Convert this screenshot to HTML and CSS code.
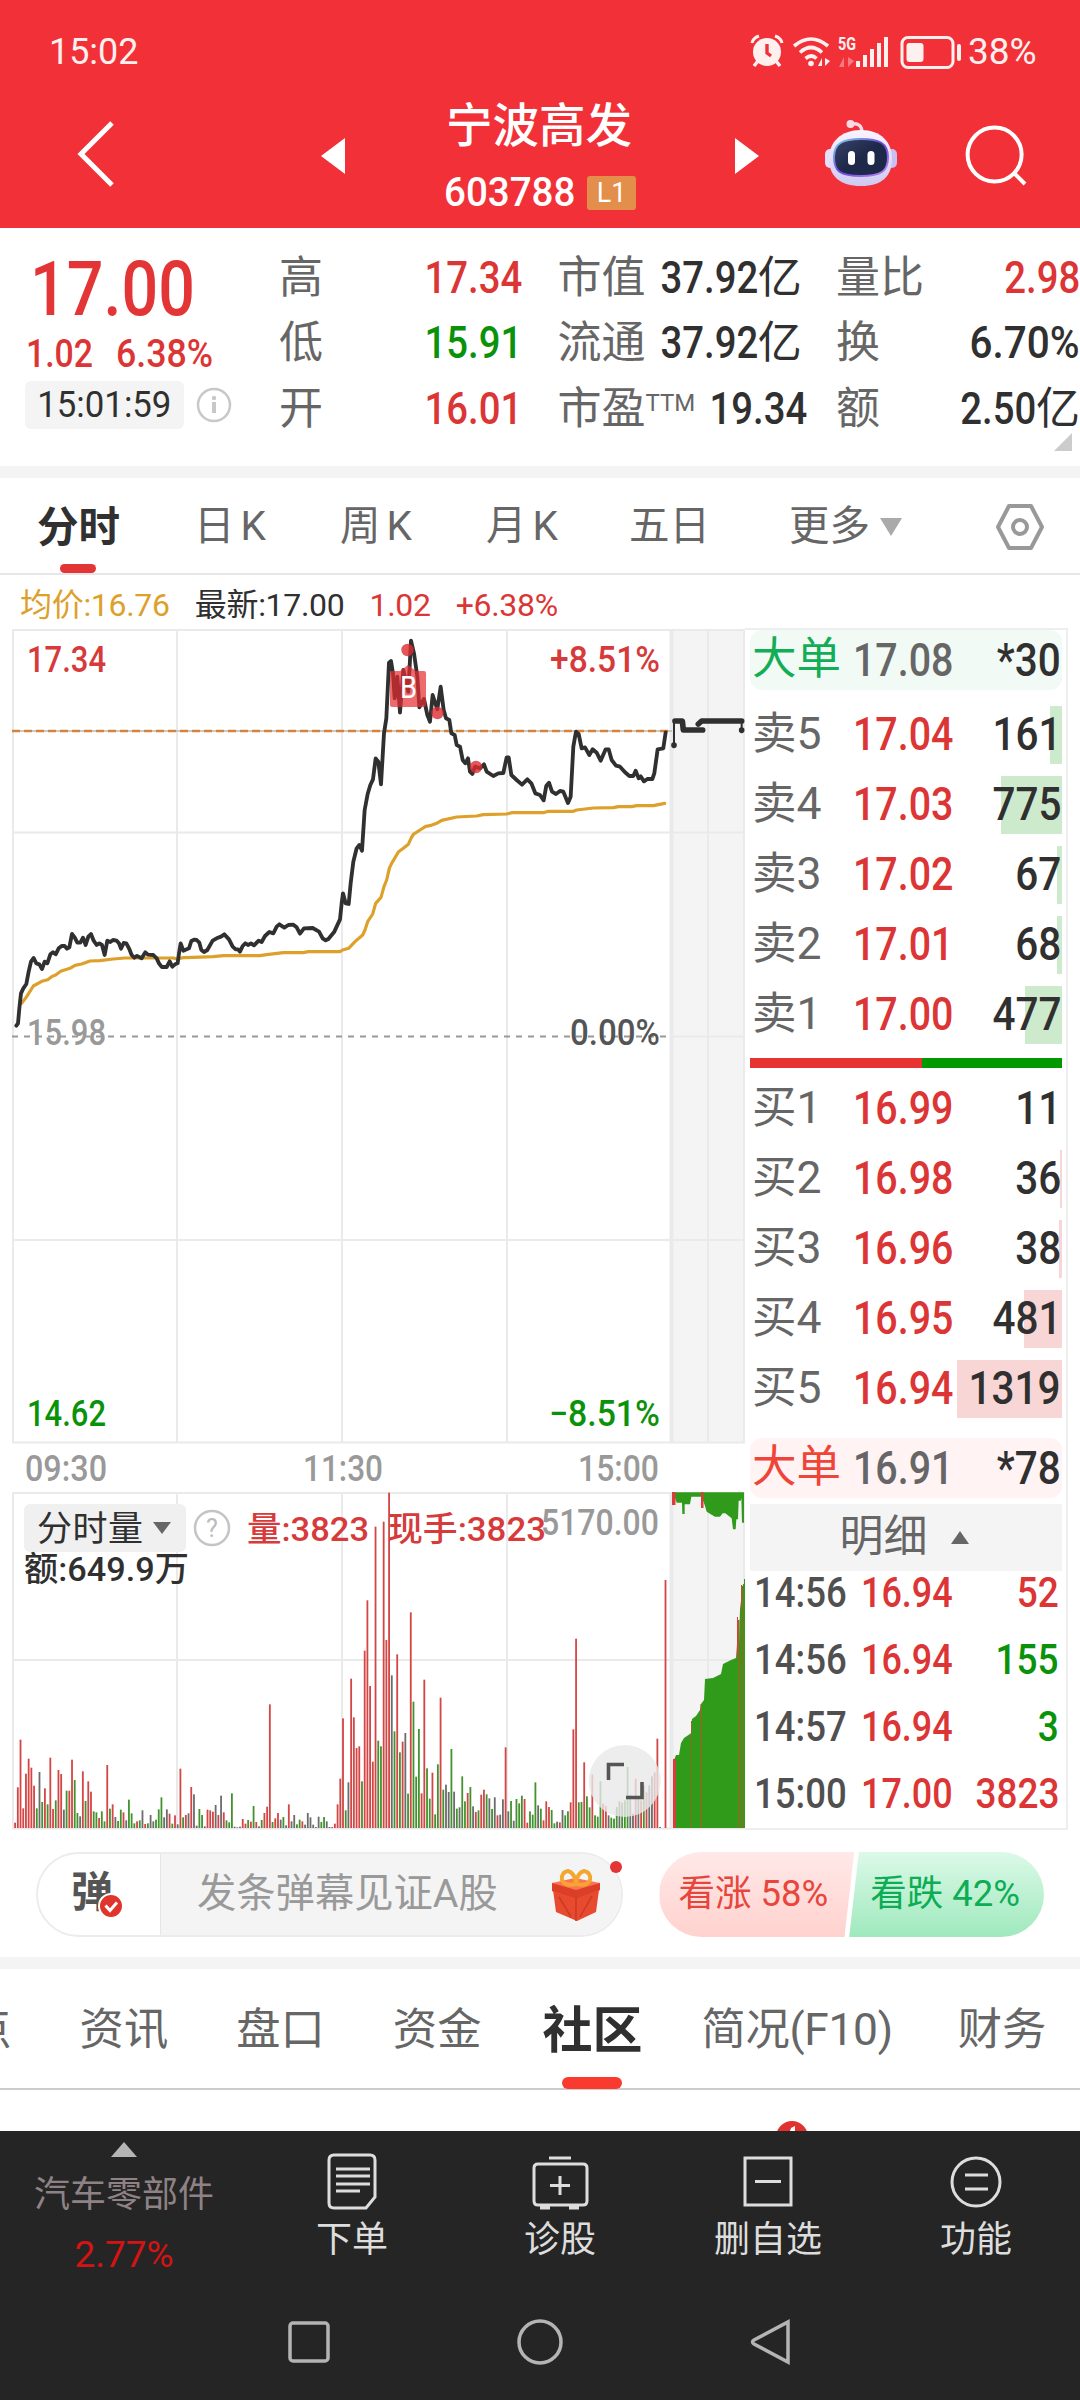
FILE: index.html
```html
<!DOCTYPE html>
<html lang="zh-CN">
<head>
<meta charset="utf-8">
<title>宁波高发 603788</title>
<link rel="stylesheet" href="styles.css">
</head>
<body>
<header class="top">
  <div class="status">
    <span class="clock">15:02</span>
    <svg class="status-icons" width="222" height="36" viewBox="740 34 222 36">
      <g fill="#fff0f0">
        <circle cx="766" cy="52" r="14"/>
        <path d="M751 43q1-5 7-7M781 43q-1-5-7-7" fill="none" stroke="#fff0f0" stroke-width="3"/>
        <path d="M757 61l-4 5M775 61l4 5" stroke="#fff0f0" stroke-width="3.5"/>
        <path d="M766 44v9l4 3" fill="none" stroke="#f03038" stroke-width="3.4"/>
        <g fill="none" stroke="#fff0f0" stroke-width="3.6">
          <path d="M793 46q17-14 34 0M799 52.500q11-10 22 0M804.500 58.500q6-5 11 0"/>
        </g>
        <circle cx="810" cy="63.500" r="2.800"/>
        <path d="M821 58v8h-4zM824 58v8l5-5z"/>
        <path opacity=".4" d="M843 57v10h-5zM847 57v10l6-6z"/>
        <path d="M855 61h4v6h-4zM862 55h4v12h-4zM869 49h4v18h-4zM876 43h4v24h-4zM883 37h4v30h-4z"/>
        <rect x="901" y="37.500" width="51" height="30" rx="6" fill="none" stroke="#fff0f0" stroke-width="3"/>
        <rect x="905.500" y="43" width="17" height="19" rx="3"/>
        <rect x="956" y="44" width="4" height="17" rx="2"/>
      </g>
      <text x="837" y="50" class="five-g" textLength="18" lengthAdjust="spacingAndGlyphs">5G</text>
    </svg>
    <span class="battery">38%</span>
  </div>
  <div class="titlebar">
    <svg width="40" height="68" viewBox="0 0 40 68"><path d="M36 3L5 34l31 31" fill="none" stroke="#fff" stroke-width="5"/></svg>
    <svg class="prev" width="24" height="36"><path d="M24 0v36L0 18z" fill="#fff"/></svg>
    <div class="title">
      <h1>宁波高发</h1>
      <div class="code"><span>603788</span><b>L1</b></div>
    </div>
    <svg class="next" width="24" height="36"><path d="M0 0v36l24-18z" fill="#fff"/></svg>
    <svg class="robot" width="74" height="70" viewBox="824 118 74 70">
      <defs>
        <linearGradient id="face" x2="1" y2="1"><stop stop-color="#3a4368"/><stop offset=".5" stop-color="#1e2848"/></linearGradient>
        <linearGradient id="rim" x2="1" y2="1"><stop stop-color="#7fd3ee"/><stop offset=".5" stop-color="#6a45d8"/><stop offset="1" stop-color="#b98bf3"/></linearGradient>
        <linearGradient id="shell" x2="0" y2="1"><stop stop-color="#faf4ff"/><stop offset="1" stop-color="#cfc9f2"/></linearGradient>
      </defs>
      <path d="M851 124q11-2 11 9" fill="none" stroke="#f5dbe8" stroke-width="3.500"/>
      <circle cx="850.500" cy="124" r="4" fill="#f3dbe8"/>
      <rect x="825" y="149" width="10" height="19" rx="5" fill="#e5ddfa"/>
      <rect x="887" y="149" width="10" height="19" rx="5" fill="#c9bff2"/>
      <path d="M861 130c20 0 31 12 31 29s-10 27-31 27-32-10-32-27 12-29 32-29z" fill="url(#shell)"/>
      <path d="M861 139c18 0 27 4 27 18s-6 19-27 19-27-5-27-19 9-18 27-18z" fill="url(#face)" stroke="url(#rim)" stroke-width="2"/>
      <rect x="848" y="151" width="7" height="14" rx="3.500" fill="#fff"/><rect x="867.500" y="151" width="7" height="14" rx="3.500" fill="#fff"/>
    </svg>
    <svg class="search" width="62" height="62" viewBox="965 125 62 62"><g fill="none" stroke="#fff" stroke-width="4"><circle cx="994.600" cy="154.600" r="27"/><path d="M1014 173l11 11"/></g></svg>
  </div>
</header>

<section class="quote">
  <div class="price">
    <div class="last">17.00</div>
    <div class="change"><span>1.02</span><span>6.38%</span></div>
    <div class="stamp"><p><span>15:01:59</span></p>
      <svg width="36" height="36"><g fill="none" stroke="#c8c8c8" stroke-width="2.500"><circle cx="18" cy="18" r="16"/><path d="M18 15v11" stroke-width="4"/></g><circle cx="18" cy="11" r="2.200" fill="#c8c8c8"/></svg>
    </div>
  </div>
  <dl>
    <div><dt>高</dt><dd class="up"><span>17.34</span></dd></div>
    <div><dt>市值</dt><dd><span>37.92</span><i>亿</i></dd></div>
    <div><dt>量比</dt><dd class="up"><span>2.98</span></dd></div>
    <div><dt>低</dt><dd class="down"><span>15.91</span></dd></div>
    <div><dt>流通</dt><dd><span>37.92</span><i>亿</i></dd></div>
    <div><dt>换</dt><dd><span class="wide">6.70%</span></dd></div>
    <div><dt>开</dt><dd class="up"><span>16.01</span></dd></div>
    <div><dt>市盈<sup>TTM</sup></dt><dd><span>19.34</span></dd></div>
    <div><dt>额</dt><dd><span>2.50</span><i>亿</i></dd></div>
  </dl>
  <svg class="corner" width="18" height="18"><path d="M18 0v18H0z" fill="#ccc"/></svg>
</section>

<nav class="periods">
  <span class="on">分时</span><span>日<em>K</em></span><span>周<em>K</em></span><span>月<em>K</em></span><span>五日</span>
  <span class="more">更多<svg width="24" height="18"><path d="M1 0h22L12 18z" fill="#aaa"/></svg></span>
  <svg class="gear" width="50" height="48" viewBox="0 0 50 48"><g fill="none" stroke="#999" stroke-width="4" stroke-linejoin="round"><path d="M14 3h22l11 21-11 21H14L3 24z"/><circle cx="25" cy="24" r="7"/></g></svg>
</nav>
<div class="legend"><span class="avg">均价:16.76</span><span>最新:17.00</span><span class="up">1.02</span><span class="up">+6.38%</span></div>

<main class="board">
  <svg class="chart" width="745" height="1202" viewBox="0 628 745 1202">
    <rect x="671" y="629" width="74" height="814" fill="#f4f4f4"/>
    <rect x="671" y="1493" width="74" height="336" fill="#f4f4f4"/>
    <g stroke="#eaeaea" stroke-width="2" fill="none">
      <path d="M12 630H745M12 832.500H745M671 1036.500H745M12 1240H745M12 1442.500H745M12 1493H745M12 1660H745M12 1828.500H745"/>
      <path d="M13 629V1443M177 629V1443M342 629V1443M507 629V1443M708 629V1443M744 629V1443M13 1493V1828M177 1493V1828M342 1493V1828M507 1493V1828M708 1493V1828M744 1493V1828"/>
      <path d="M671.500 629V1443M671.500 1493V1828" stroke-width="4"/>
    </g>
    <path d="M12 731H672" stroke="#b9b9a8" stroke-width="1.500"/>
    <path d="M12 731H672" stroke="#d5853b" stroke-width="2.400" stroke-dasharray="8 4"/>
    <path d="M12 1036.500H667" stroke="#999" stroke-width="2" stroke-dasharray="6 6"/>
    <text class="t g" x="27" y="1045" textLength="79" lengthAdjust="spacingAndGlyphs">15.98</text>
    <text class="t" x="570" y="1045" textLength="90" lengthAdjust="spacingAndGlyphs">0.00%</text>
    <g fill="none" stroke-linejoin="round" stroke-linecap="round" transform="translate(0 620) scale(.33333)">
      <polyline stroke="#dda02a" stroke-width="9.500" points="65,1150 80,1130 100,1098 125,1084 143,1079 155,1070 167,1065 182,1054 210,1045 225,1036 245,1032 270,1023 300,1022 340,1017 375,1014 520,1014 530,1017 550,1013 580,1012 640,1010 670,1007 780,1007 800,1004 825,1001 850,998 910,998 925,995 1020,995 1028,990 1046,985 1065,965 1088,945 1095,930 1103,905 1118,882 1127,850 1143,832 1152,800 1160,780 1168,745 1175,730 1195,696 1210,685 1225,673 1233,655 1240,643 1260,630 1277,619 1290,617 1310,610 1325,601 1370,591 1430,588 1450,584 1520,582 1535,578 1630,578 1645,574 1720,574 1730,570 1780,564 1840,563 1855,560 1895,560 1910,557 1960,557 1994,550"/>
      <polyline stroke="#303030" stroke-width="11.500" points="49,1217 54,1210 58,1165 63,1120 70,1105 79,1092 86,1055 93,1025 101,1014 109,1030 118,1033 126,1047 134,1025 142,1030 151,1003 159,997 167,1003 176,985 185,978 194,978 201,986 208,982 216,942 224,952 232,968 241,968 249,953 257,975 265,950 273,942 281,962 290,975 298,970 306,975 314,1005 322,962 331,966 339,960 350,962 357,970 363,986 371,969 379,970 387,985 395,1005 403,1013 411,1008 425,1015 436,997 444,1004 460,1005 470,1015 477,1030 485,1041 500,1041 509,1024 517,1040 525,1033 533,1030 537,1000 542,970 550,992 567,985 574,963 582,959 590,960 598,968 604,990 612,996 622,990 638,962 650,955 663,950 673,943 687,958 698,980 707,988 714,988 720,995 728,978 736,970 745,975 753,970 762,976 776,962 785,966 795,948 808,936 820,940 830,920 838,913 853,923 865,915 880,914 890,922 900,941 912,925 938,924 957,935 968,955 977,961 985,957 1003,935 1020,898 1025,850 1029,820 1037,850 1046,852 1052,790 1060,725 1070,685 1078,675 1086,692 1094,570 1103,522 1111,495 1119,478 1127,415 1135,425 1143,493 1152,340 1159,295 1167,128 1173,123 1179,160 1184,235 1192,170 1200,278 1210,150 1225,215 1233,62 1242,100 1252,170 1258,262 1272,237 1282,285 1290,305 1298,225 1306,250 1312,268 1322,200 1331,270 1338,295 1348,300 1354,340 1364,345 1370,375 1380,380 1388,420 1396,430 1404,415 1410,455 1417,462 1425,440 1440,445 1452,433 1460,455 1480,468 1495,460 1510,459 1520,412 1526,412 1534,465 1550,480 1566,494 1582,478 1594,490 1606,520 1620,525 1631,541 1639,497 1647,488 1656,515 1668,522 1680,513 1690,515 1704,549 1712,530 1720,380 1728,335 1736,342 1745,385 1755,382 1768,405 1778,388 1790,398 1802,422 1817,388 1826,388 1835,420 1848,437 1860,440 1875,457 1888,468 1900,468 1907,452 1916,475 1922,469 1932,484 1942,477 1957,477 1963,460 1973,388 1990,385 1997,337"/>
      <path stroke="#303030" stroke-width="6" d="M2022 375V302M2225 302V330"/>
      <path stroke="#303030" stroke-width="17" d="M2025 303h22l3 27h58M2095 312l10-9h120M2022 375v1M2225 330v1"/>
    </g>
    <g fill="#dd2c2f" fill-opacity=".8"><circle cx="407.500" cy="650" r="6.200"/><circle cx="437.500" cy="713" r="6.200"/><circle cx="476" cy="767" r="6.200"/>
      <path fill="#e62c30" fill-opacity=".7" d="M392 671h8l8-6 8 6h8q2 0 2 2v32q0 2-2 2h-32q-2 0-2-2v-32q0-2 2-2z"/></g>
    <text x="400" y="698" class="buy" textLength="17" lengthAdjust="spacingAndGlyphs">B</text>
    <text class="t r" x="27" y="672" textLength="79" lengthAdjust="spacingAndGlyphs">17.34</text>
    <text class="t r" x="550" y="672" textLength="110" lengthAdjust="spacingAndGlyphs">+8.51%</text>
    <text class="t d" x="27" y="1426" textLength="79" lengthAdjust="spacingAndGlyphs">14.62</text>
    <text class="t d" x="549" y="1426" textLength="111" lengthAdjust="spacingAndGlyphs">−8.51%</text>
    <text class="t g" x="25" y="1481" textLength="82" lengthAdjust="spacingAndGlyphs">09:30</text>
    <text class="t g" x="303" y="1481" textLength="80" lengthAdjust="spacingAndGlyphs">11:30</text>
    <text class="t g" x="578" y="1481" textLength="81" lengthAdjust="spacingAndGlyphs">15:00</text>

    <g id="volume"></g>
    <g fill="#309b1b">
      <path transform="translate(320 1480) scale(.33333)" d="M1062 37v8l8 23h16l1 34h7V73h16l4-23h31l10 28 5 17 25 15h15l8-10h8l19 15 4 33h8l2-30h5l2-56h6l2-7 2 73h6V37z"/>
      <path d="M674 1828V1760l2-5h3l2-12 3-5 6-4 1-1 1-14 4-3 4-6 1-6 3-4 1-21 8-1 8-4 2-10 8-4 5-2 1-14h2l1-35 3-25h1V1579h2V1828z"/>
      <path fill="#dc3c3c" d="M672 1492h3.500v13h-3.500zM701 1492h2.500v16h-2.500zM673 1759h3v69h-3zM737 1617h1v40h-1zM741 1585h1v23h-1z"/>
      <path fill="#8c6c21" d="M691 1721h1v107h-1zM700.500 1704h1.500v124h-1.500zM738 1620h1.500v208h-1.500zM741.500 1586h1.500v242h-1.500z"/>
    </g>
    <g class="vol-labels">
      <rect x="24" y="1504" width="162" height="48" rx="6" fill="#f0f0f0"/>
      <text class="c" x="37" y="1541" textLength="106">分时量</text>
      <path d="M153 1522h18l-9 12z" fill="#666"/>
      <circle cx="212" cy="1528" r="17" fill="none" stroke="#c4c4c4" stroke-width="2.500"/>
      <text class="q" x="212" y="1537" text-anchor="middle">?</text>
      <text class="c r m" x="247" y="1541" textLength="122" lengthAdjust="spacingAndGlyphs">量:3823</text>
      <text class="c r m" x="388" y="1541" textLength="158" lengthAdjust="spacingAndGlyphs">现手:3823</text>
      <text class="t g" x="541" y="1535" textLength="118" lengthAdjust="spacingAndGlyphs">5170.00</text>
      <text class="c m" x="24" y="1581" textLength="165" lengthAdjust="spacingAndGlyphs">额:649.9万</text>
    </g>
    <circle cx="624.700" cy="1781" r="36" fill="#e8e8e8" fill-opacity=".8"/>
    <path d="M608.500 1780v-15.500h15.500M626 1797.500h16V1782" fill="none" stroke="#555" stroke-width="3.600"/>
  </svg>

  <aside class="book">
    <div class="big sell"><span>大单</span><b>17.08</b><strong>*30</strong></div>
    <div class="rows">
      <div><span>卖5</span><b>17.04</b><strong>161</strong><i style="width:12px"></i></div>
      <div><span>卖4</span><b>17.03</b><strong>775</strong><i style="width:61px"></i></div>
      <div><span>卖3</span><b>17.02</b><strong>67</strong><i style="width:5px"></i></div>
      <div><span>卖2</span><b>17.01</b><strong>68</strong><i style="width:5px"></i></div>
      <div><span>卖1</span><b>17.00</b><strong>477</strong><i style="width:37px"></i></div>
    </div>
    <div class="ratio"></div>
    <div class="rows buys">
      <div><span>买1</span><b>16.99</b><strong>11</strong><i style="width:0px"></i></div>
      <div><span>买2</span><b>16.98</b><strong>36</strong><i style="width:2px"></i></div>
      <div><span>买3</span><b>16.96</b><strong>38</strong><i style="width:3px"></i></div>
      <div><span>买4</span><b>16.95</b><strong>481</strong><i style="width:38px"></i></div>
      <div><span>买5</span><b>16.94</b><strong>1319</strong><i style="width:105px"></i></div>
    </div>
    <div class="big purchase"><span>大单</span><b>16.91</b><strong>*78</strong></div>
    <div class="detail-head">明细<svg width="18" height="13"><path d="M9 0l9 13H0z" fill="#666"/></svg></div>
    <div class="ticks">
      <div><span>14:56</span><b>16.94</b><strong class="up">52</strong></div>
      <div><span>14:56</span><b>16.94</b><strong class="down">155</strong></div>
      <div><span>14:57</span><b>16.94</b><strong class="down">3</strong></div>
      <div><span>15:00</span><b>17.00</b><strong class="up">3823</strong></div>
    </div>
  </aside>
</main>

<section class="social">
  <div class="danmu">
    <div class="toggle">弹<svg width="26" height="26"><circle cx="13" cy="13" r="12" fill="#e0352c" stroke="#fff" stroke-width="2"/><path d="M7.500 12.500l4.500 5 7-8" fill="none" stroke="#fff" stroke-width="3"/></svg></div>
    <div class="input">发条弹幕见证A股
      <svg width="52" height="54" viewBox="0 0 52 54">
        <path d="M3 22L26 29 49 22 46 44 27 53 6 44z" fill="#e84a2f"/>
        <path d="M2 15l23-5 25 5v7l-24 9L2 23z" fill="#ff7350"/>
        <path d="M2 15l24 7 24-7v7l-24 9L2 23z" fill="#dc3f27"/>
        <path d="M26 29v24M9 29l12 20M42 28L30 49" stroke="#c93a24" stroke-width="1.500"/>
        <g fill="none" stroke="#f2a830" stroke-width="4"><path d="M26 16C8 20 9 4 18 3q7 2 8 13C44 20 43 4 34 3q-7 2-8 13"/></g>
      </svg>
    </div>
    <i class="dot"></i>
  </div>
  <div class="vote"><div class="bull">看涨 58%</div><div class="bear">看跌 42%</div></div>
</section>

<nav class="tabs">
  <span>热点</span><span>资讯</span><span>盘口</span><span>资金</span><span class="on">社区</span><span>简况(F10)</span><span>财务</span>
</nav>
<div class="feed"><svg width="32" height="10"><circle cx="16" cy="16" r="16" fill="#e0322f"/><path d="M15 7l4-2v5h-5z" fill="#fff"/></svg></div>

<footer>
  <div class="actions">
    <div class="sector"><svg width="26" height="15"><path d="M13 0l13 15H0z" fill="#b5b5b5"/></svg><span>汽车零部件</span><b>2.77%</b></div>
    <div><svg width="60" height="60" viewBox="0 0 60 60"><path d="M12 4h36q5 0 5 5v37l-9 11H12q-5 0-5-5V9q0-5 5-5z"/><path d="M14 18h34M14 25h34M14 33h34M14 40h24"/></svg>下单</div>
    <div><svg width="60" height="60" viewBox="0 0 60 60"><path d="M8 13h45q4 0 4 4v33q0 4-4 4H8q-4 0-4-4V17q0-4 4-4zM19 7h22M30 25v19M20 34.500h20M10 57h10M39 57h10"/></svg>诊股</div>
    <div><svg width="60" height="60" viewBox="0 0 60 60"><path d="M7 7h46v47H7zM17 30.500h26"/></svg>删自选</div>
    <div><svg width="60" height="60" viewBox="0 0 60 60"><circle cx="30" cy="31" r="24"/><path d="M19 24h23M19 38h23"/></svg>功能</div>
  </div>
  <div class="system">
    <svg width="42" height="42"><rect x="2" y="2" width="38" height="38" rx="3"/></svg>
    <svg width="46" height="46"><circle cx="23" cy="23" r="21"/></svg>
    <svg width="42" height="48"><path d="M38 4v40L4 26q-3-2 0-4z"/></svg>
  </div>
</footer>
<script src="volume.js"></script>
</body>
</html>
```

FILE: styles.css
```css
* { box-sizing: border-box; }
body { margin: 0; width: 1080px; height: 2400px; overflow: hidden; background: #fff; color: #303030;
  font-family: Roboto, "Noto Sans CJK SC", sans-serif; line-height: 1.2; }
svg { display: block; flex: none; }
h1, dl, dt, dd, p { margin: 0; font-weight: 400; }
i, em { font-style: normal; }
.up { color: #dc3535; }
.down { color: #0b920b; }

.clock, .code span, .last, .change span, .stamp span, dd span, .book b, .ticks span { display: inline-block; transform: scaleX(.87); transform-origin: left; }
.book strong { display: inline-block; transform: scaleX(.88); transform-origin: right; }

.top { height: 228px; background: #f23038; color: #fff; }
.status { height: 70px; padding: 34px 40px 0 49px; display: flex; align-items: center; font-size: 37px; line-height: 38px; }
.clock { transform: scaleX(.97); color: #fff0f0; }
.status-icons { margin-left: auto; }
.five-g { font-size: 18px; font-weight: 700; fill: #fff0f0; }
.battery { width: 72px; margin-left: 5px; color: #fff0f0; }
.titlebar { height: 158px; display: grid; grid-template-columns: 245px 127px 287px 89px 141px 1fr; padding-left: 76px; }
.titlebar > svg { margin-top: 50px; }
.titlebar > .prev, .titlebar > .next { margin-top: 68px; }
.titlebar > .robot { margin-top: 48px; }
.titlebar > .search { margin-top: 55px; }
.title { white-space: nowrap; padding-top: 27px; margin-left: -2px; }
.title h1 { font-size: 46.5px; line-height: 58px; font-weight: 500; }
.code { display: flex; align-items: center; height: 46px; margin-top: 15px; font-size: 41px; font-weight: 500; }
.code span { width: 141px; transform: scaleX(.94); margin-left: -2px; }
.code b { flex: none; width: 49px; height: 34px; border-radius: 3px; background: #e38e4b; font: 400 27px/34px Roboto, sans-serif; text-align: center; margin-left: 2px; }

.quote { height: 250px; border-bottom: 12px solid #f4f4f4; display: flex; padding-top: 17px; position: relative; }
.price { width: 281px; color: #dc3535; padding-left: 25px; }
.last { font-size: 76px; line-height: 76px; font-weight: 500; padding-left: 6px; margin-top: 6px; color: #e33535; transform: scaleX(.85); }
.change { display: flex; font-size: 38px; line-height: 40px; margin: 7px 0 0 1px; font-weight: 500; }
.change span { width: 90px; transform: scaleX(.89); }
.change span + span { transform: scaleX(.94); }
.stamp { display: flex; align-items: center; gap: 12px; margin-top: 7px; }
.stamp p { width: 159px; height: 48px; border-radius: 6px; background: #f4f4f4; color: #303030; font-size: 37px; line-height: 48px; text-align: center; }
.stamp span { transform: scaleX(.94); transform-origin: center; }
.quote dl { width: 799px; display: grid; grid-template-columns: 241px 241px 242px; column-gap: 37.500px; grid-auto-rows: 65.500px; white-space: nowrap; }
.quote dl div { display: flex; justify-content: space-between; align-items: center; }
dt { font-size: 44px; color: #666; line-height: 60px; margin-left: -2px; }
dt sup { font-size: 24px; line-height: 0; vertical-align: 13px; }
dd { font-size: 44px; font-weight: 500; line-height: 60px; }
dd span { transform-origin: right; }
dd .wide { transform: scaleX(.92); }
dd i { font-weight: 400; font-size: 44px; }
.corner { position: absolute; right: 8px; bottom: 15px; }

.periods { height: 97px; border-bottom: 2px solid #e6e6e6; display: flex; align-items: center; position: relative; font-size: 40.5px; color: #666; padding: 2px 0 0 37px; }
.periods span { width: 146px; white-space: nowrap; }
.periods em { margin-left: 6px; }
.periods .on { width: 157px; height: 93px; line-height: 96px; font-weight: 700; font-size: 41.5px; color: #303030; position: relative; }
.periods .on::after { content: ""; position: absolute; left: 23px; bottom: 0; width: 36px; height: 9px; border-radius: 5px; background: #e33535; }
.periods span:nth-child(4) { width: 143px; }
.periods span:nth-child(5) { width: 160px; }
.periods .more { width: 147px; display: flex; align-items: center; gap: 9px; }
.gear { margin-left: 59px; }

.legend { height: 53px; display: flex; padding: 0 0 0 20px; font-size: 32px; line-height: 60px; gap: 25px; white-space: nowrap; letter-spacing: -.3px; }
.avg { color: #dda02a; }

.board { display: flex; width: 1068px; height: 1202px; }
.t { font-size: 36px; fill: #555; font-weight: 500; }
.t.g { fill: #999; }
.r, .t.r { fill: #d63a3a; }
.t.d { fill: #0b920b; }
.c { font-size: 35px; fill: #303030; }
.c.r { fill: #d63a3a; }
.c.m { font-size: 34px; font-weight: 500; }
.q { font-size: 25px; fill: #bbb; }
.buy { font-size: 31px; fill: #fff; }
.vr { fill: #d44545; } .vg { fill: #43922f; } .vk { fill: #6c6c6c; }

.book { width: 323px; border: 2px solid #eee; border-left: 0; padding: 0 4px 0 5px; }
.book > div > div, .big { display: grid; grid-template-columns: 101px 92px 1fr; align-items: center; padding: 0 1px 0 2px; position: relative; white-space: nowrap; }
.book b, .book strong { font-weight: 500; font-size: 46px; position: relative; z-index: 1; }
.book b { color: #dc3535; transform: scaleX(.855); }
.book strong { justify-self: end; }
.book span { font-size: 44.5px; color: #666; }
.big { height: 60px; border-radius: 12px; background: #f1faf5; line-height: 1.15; }
.big span { color: #12ad55; }
.big b { color: #666; }
.purchase { background: #fff3f3; margin-top: 20px; }
.purchase span { color: #f04438; }
.rows > div { height: 58px; margin-bottom: 12px; }
.rows { padding-top: 16px; }
.rows > div:last-child { margin-bottom: 0; }
.rows i { position: absolute; right: 0; top: 0; height: 58px; background: #cdeacd; }
.ratio { height: 10px; margin-top: 14px; background: linear-gradient(90deg, #e83333 55%, #009900 55%); }
.buys { padding-top: 12px; }
.buys i { background: #f9d6d6; }
.detail-head { height: 67px; margin-top: 6px; background: #f4f4f4; display: flex; align-items: center; justify-content: center; gap: 23px; font-size: 44px; color: #666; padding-right: 4px; }
.ticks { margin-top: -11px; }
.book > .ticks > div { height: 67px; grid-template-columns: 107px 84px 1fr; padding: 0 3px 0 4px; }
.book .ticks b, .book .ticks strong { font-size: 42px; }
.book .ticks span { font-size: 42px; font-weight: 500; color: #505050; }
.book .up { color: #dc3535; }
.book .down { color: #0b920b; }

.social { height: 139px; border-bottom: 12px solid #f4f4f4; display: flex; padding: 22px 36px 0; gap: 36px; }
.danmu { width: 588px; height: 85px; border: 2px solid #ececec; border-radius: 43px; display: flex; position: relative; }
.toggle { width: 123px; border-right: 1px solid #e6e6e6; font-size: 42px; line-height: 78px; font-weight: 700; color: #555; padding-left: 33px; position: relative; }
.toggle svg { position: absolute; left: 60px; top: 39px; }
.input { flex: 1; border-radius: 0 42px 42px 0; background: #f4f4f4; display: flex; align-items: center; justify-content: space-between; padding: 1px 19px 0 36px; font-size: 39.3px; color: #999; white-space: nowrap; }
.dot { position: absolute; right: -1px; top: 7px; width: 12px; height: 12px; border-radius: 6px; background: #e33535; }
.vote { width: 385px; height: 85px; border-radius: 43px; overflow: hidden; display: flex; font-size: 36.5px; line-height: 84px; white-space: nowrap; }
.vote div { padding-left: 19px; width: 195px; background: linear-gradient(#ffe9e8, #ffd2ce); color: #e8453c; clip-path: polygon(0 0, 100% 0, 95% 100%, 0 100%); }
.vote .bear { margin-left: -5px; padding-left: 21px; background: linear-gradient(#dcf9e8, #9fe9bd); color: #0cad55; clip-path: polygon(5% 0, 100% 0, 100% 100%, 0 100%); }

.tabs { height: 121px; border-bottom: 2px solid #ccc; display: flex; align-items: center; gap: 68px; margin-left: -77px; padding-top: 4px; width: 1157px; font-size: 44.3px; color: #666; white-space: nowrap; }
.tabs span { flex: none; }
.tabs .on { font-size: 50px; font-weight: 700; color: #303030; position: relative; height: 115px; line-height: 116px; margin: 0 -9px 0 -7px; }
.tabs .on::after { content: ""; position: absolute; left: 20px; bottom: -1px; width: 60px; height: 12px; border-radius: 6px; background: #fa3a2e; }
.tabs .on + span { letter-spacing: -.3px; margin-right: -3px; }
.feed { height: 41px; padding: 31px 0 0 776px; }

footer { height: 269px; background: #252525; color: #ddd; }
.actions { height: 160px; display: grid; grid-template-columns: 248px 208px 208px 208px 208px; font-size: 36px; }
.actions > div { display: flex; flex-direction: column; align-items: center; line-height: 52px; padding-top: 20px; }
.actions > div > svg { fill: none; stroke: #ddd; stroke-width: 3; margin-bottom: 3px; }
.actions .sector { padding-top: 11px; color: #8f8285; }
.actions .sector svg { stroke: none; margin-bottom: 12px; }
.sector b { color: #d21414; font-weight: 400; font-size: 37px; margin-top: 8px; }
.system { height: 109px; display: flex; align-items: center; padding: 0 0 7px 288px; gap: 187px; }
.system svg { fill: none; stroke: #b4b4b4; stroke-width: 3.500; }
```

FILE: volume.js
```js
// One entry per minute: colour letter, then bar height in thirds of a pixel.
const minutes = `r16 r122 r265 r59 r163 r208 r181 r127 g59 k168 g78 r119 g71 r211 r57 g83 r174 r162 k55 g112 r112 r205 g144 g45 k35 r170 g81 r140 r109 g50 g47 r30 g50 g20 r189 g58 r71 k33 g21 g55 r47 k23 g85 g44 g14 r20 g23 k53 r12 g14 k39 k20 g25 g56 g92 k32 k56 r43 g13 r38 k11 r178 g32 r39 k44 r123 k101 k7 g57 g39 k5 r55 r53 r49 k69 r39 k97 r47 g23 g17 g104 k4 k2 k4 r27 r13 g24 r19 g66 r18 k5 g24 r45 r64 r371 g18 r29 r45 k25 g33 k8 r71 k20 k39 g11 g25 r20 k10 k45 k32 k10 g3 k34 g18 g33 k20 k3 r3 r13 r71 r148 r329 g53 k137 r448 r332 r240 r245 g140 r532 r683 r426 r199 r904 g262 g245 r919 r564 r1006
k458 g290 r521 g227 r259 k285 g103 r647 g379 g154 g297 r104 r445 g179 g88 r166 g41 g191 r391 g115 k130 k108 g237 k109 g58 k62 g155 g80 r105 g123 k65 r48 g53 r100 r115 g101 k89 g57 k92 r38 k40 k86 r242 k50 g81 k22 g87 g74 g97 r87 r16 g50 g40 g137 k68 g58 r23 r80 r63 g54 g14 k19 r17 k54 g38 g50 r77 r296 r568 g77 g78 r197 g95 g62 r161 g38 g34 g140 r73 r66 k38 g31 g28 g63 k80 g76 g83 g183 k98 k43 r148 k88 r83 g128 r107 k128 k155 r167 r268 k3 n0 r744`.split(/\s+/);
const svgNS = "http://www.w3.org/2000/svg";
const group = document.getElementById("volume");
minutes.forEach((entry, i) => {
  const h = Number(entry.slice(1)) / 3;
  const bar = document.createElementNS(svgNS, "rect");
  bar.setAttribute("class", "v" + entry[0]);
  bar.setAttribute("x", 14.2 + i * 2.71);
  bar.setAttribute("y", 1828 - h);
  bar.setAttribute("width", 1.8);
  bar.setAttribute("height", h);
  group.appendChild(bar);
});
```
